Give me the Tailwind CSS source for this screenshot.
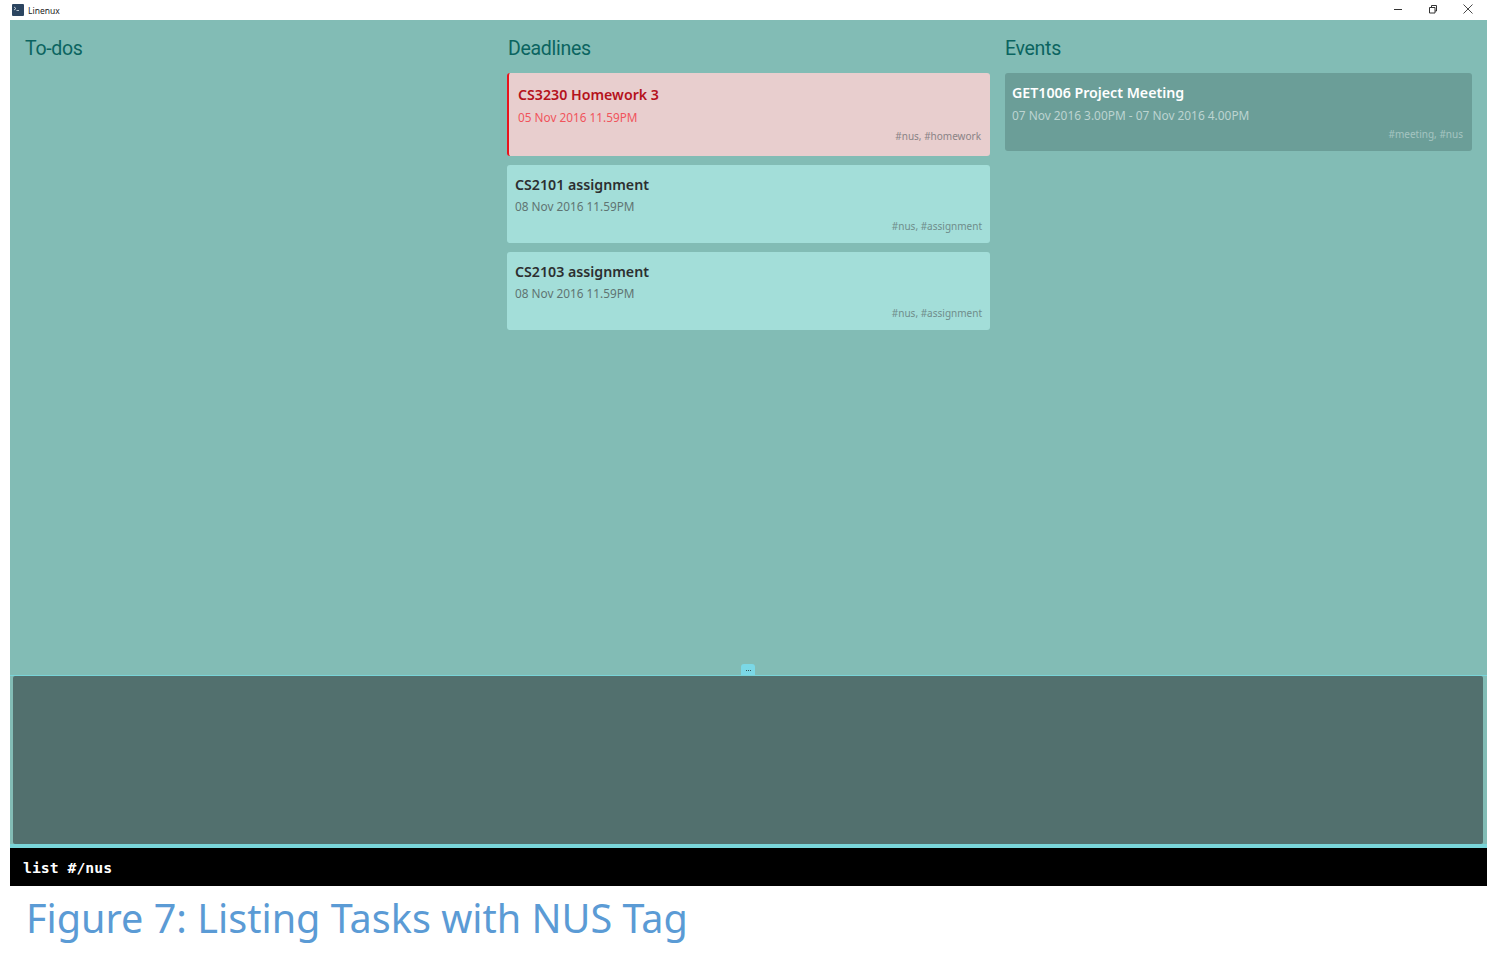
<!DOCTYPE html>
<html lang="en">
<head>
    <meta charset="UTF-8">
    <title>Linenux</title>
    <script src="https://cdn.jsdelivr.net/npm/@tailwindcss/browser@4"></script>
</head>
<body class="bg-white w-[1487px] h-[969px] overflow-hidden font-['Noto_Sans',sans-serif]">
    <!-- title bar -->
    <header class="h-5 flex items-center justify-between bg-white">
        <div class="flex items-center pl-3">
            <svg class="w-[12px] h-[12px]" viewBox="0 0 12 12"><rect width="12" height="12" rx="1" fill="#2c4560"/><path d="M2 3l2 1.500L2 6M4.500 6.500H7" stroke="#dfe7ee" stroke-width="0.8" fill="none"/></svg>
            <span class="ml-1 pt-[2px] text-[8.500px] text-[#222] font-['Noto_Sans',sans-serif]">Linenux</span>
        </div>
        <div class="flex items-center gap-[25px] pr-[14px] pb-[3px]">
            <svg class="w-[10px] h-[10px]" viewBox="0 0 10 10"><path d="M1 5.500h8" stroke="#333" stroke-width="1"/></svg>
            <svg class="w-[10px] h-[10px]" viewBox="0 0 10 10"><path d="M1.500 3.500h5.500v5.500H1.500zM3.500 3.500V1.500h5v5.500H7" stroke="#333" stroke-width="1" fill="none"/></svg>
            <svg class="w-[10px] h-[10px]" viewBox="0 0 10 10"><path d="M0.500 0.500l9 9M9.500 0.500l-9 9" stroke="#333" stroke-width="0.9"/></svg>
        </div>
    </header>

    <div class="ml-[10px] w-[1477px]">
        <!-- task columns -->
        <main class="relative h-[655px] bg-[#82bcb5] flex">
            <section class="w-[497px] pl-[15px] pt-[16px]">
                <h2 class="text-[19.500px] leading-[26px] tracking-[-0.3px] text-[#0b6460] font-['Roboto',sans-serif]">To-dos</h2>
            </section>
            <section class="w-[483px] pt-[16px]">
                <h2 class="text-[19.500px] leading-[26px] tracking-[-0.3px] text-[#0b6460] font-['Roboto',sans-serif] pl-px">Deadlines</h2>
                <div class="mt-[11px] flex flex-col gap-[9px]">
                    <article class="h-[83px] rounded-[3px] bg-[#e8cece] border-l-2 border-[#e8141c] pl-[9px] pr-[9px] pt-[12px]">
                        <h3 class="text-[14.200px] leading-5 font-semibold text-[#b5121b]">CS3230 Homework 3</h3>
                        <p class="mt-[3px] text-[11.800px] leading-[18px] text-[#f0545c]">05 Nov 2016 11.59PM</p>
                        <p class="mt-[2px] text-[10px] leading-[16px] text-right text-[#8a8386]">#nus, #homework</p>
                    </article>
                    <article class="h-[78px] rounded-[3px] bg-[#a3ded9] px-2 pt-[10px]">
                        <h3 class="text-[14.200px] leading-5 font-semibold text-[#2c2f30]">CS2101 assignment</h3>
                        <p class="mt-[2px] text-[11.800px] leading-[18px] text-[#5f7472]">08 Nov 2016 11.59PM</p>
                        <p class="mt-[3px] text-[10px] leading-[16px] text-right text-[#6f8d8b]">#nus, #assignment</p>
                    </article>
                    <article class="h-[78px] rounded-[3px] bg-[#a3ded9] px-2 pt-[10px]">
                        <h3 class="text-[14.200px] leading-5 font-semibold text-[#2c2f30]">CS2103 assignment</h3>
                        <p class="mt-[2px] text-[11.800px] leading-[18px] text-[#5f7472]">08 Nov 2016 11.59PM</p>
                        <p class="mt-[3px] text-[10px] leading-[16px] text-right text-[#6f8d8b]">#nus, #assignment</p>
                    </article>
                </div>
            </section>
            <section class="ml-[15px] w-[467px] pt-[16px]">
                <h2 class="text-[19.500px] leading-[26px] tracking-[-0.3px] text-[#0b6460] font-['Roboto',sans-serif]">Events</h2>
                <div class="mt-[11px]">
                    <article class="h-[78px] rounded-[3px] bg-[#6b9e98] pl-[7px] pr-[9px] pt-[10px]">
                        <h3 class="text-[14.200px] leading-5 font-semibold text-white">GET1006 Project Meeting</h3>
                        <p class="mt-[3px] text-[11.900px] leading-[18px] text-[#bcd4d1]">07 Nov 2016 3.00PM - 07 Nov 2016 4.00PM</p>
                        <p class="mt-[2px] text-[10px] leading-[16px] text-right text-[#a5c5c1]">#meeting, #nus</p>
                    </article>
                </div>
            </section>
            <!-- divider handle -->
            <div class="absolute left-[731px] bottom-0 w-[14px] h-[11px] rounded-t-[3px] bg-[#7bd8e6] flex items-center justify-center gap-px pt-px">
                <span class="w-px h-px bg-[#33585c]"></span><span class="w-px h-px bg-[#33585c]"></span><span class="w-px h-px bg-[#33585c]"></span>
            </div>
        </main>

        <!-- result pane -->
        <div class="h-[173px] bg-[#82bcb5] border-t border-[#79d5d9] border-b-4 border-b-[#79d5d9] pl-[3px] pr-[4px]">
            <div class="h-[168px] rounded-[2px] bg-[#52706e]"></div>
        </div>

        <!-- command box -->
        <div class="h-[38px] bg-black pl-[13px] pt-[3px] flex items-center text-[14.800px] font-bold text-white font-['DejaVu_Sans_Mono',monospace]">list #/nus</div>
    </div>

    <p class="pl-[26px] mt-[5px] text-[39.600px] leading-[54px] text-[#5b9bd5] font-['Noto_Sans',sans-serif]">Figure 7: Listing Tasks with NUS Tag</p>
</body>
</html>
